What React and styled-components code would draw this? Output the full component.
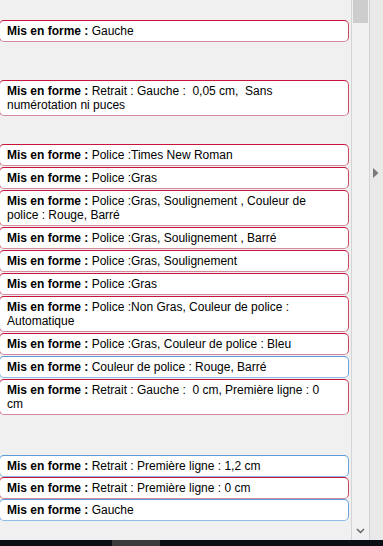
import React from 'react'
import styled, { createGlobalStyle } from 'styled-components'

const Global = createGlobalStyle`
  html, body {
    margin: 0;
    padding: 0;
    background: #f0f0f0;
    overflow: hidden;
  }
  body {
    font-family: "Liberation Sans", Arial, sans-serif;
  }
`

const Screen = styled.div`
  width: 383px;
  height: 546px;
  display: flex;
  flex-direction: column;
`

const Workspace = styled.div`
  flex: 1;
  display: flex;
  min-height: 0;
`

const Pane = styled.div`
  width: 351px;
  overflow: hidden;
`

const Group = styled.div`
  display: flex;
  flex-direction: column;
  gap: ${p => p.$gap}px;
  margin-top: ${p => p.$top}px;
`

const Bubble = styled.div`
  margin-left: -1px;
  width: 350px;
  box-sizing: border-box;
  background: #fff;
  border: 1px solid;
  border-color: ${p =>
    p.$blue ? '#5a9ad8 #6aa6dc #8dbbe6' : '#c8143c #c84a62 #d4889a'};
  border-radius: 5px;
  padding: 3px 12px 3px 7px;
  font-size: 12px;
  line-height: 14px;
  color: #000;
  white-space: pre-wrap;
`

const Label = styled.b`
  font-weight: bold;
`

const Scrollbar = styled.div`
  width: 17px;
  border-left: 1px solid #d4d4d4;
  background: #f0f0f0;
  display: flex;
  flex-direction: column;
  justify-content: space-between;
  align-items: center;
`

const Thumb = styled.div`
  width: 15px;
  height: 23px;
  background: #cdcdcd;
`

const DownArrow = styled.svg`
  margin-bottom: 6px;
`

const SidePanel = styled.div`
  flex: 1;
  border-left: 1px solid #d4d4d4;
  background: #e9e9e9;
  display: flex;
  align-items: flex-start;
  padding-top: 168px;
  padding-left: 3px;
`

const Taskbar = styled.div`
  height: 6px;
  background: #0b0f15;
  display: flex;
`

const TaskItem = styled.div`
  margin-left: 112px;
  width: 48px;
  background: #3a3a3a;
`

const groups = [
  { top: 20, gap: 1, items: [{ t: 'Gauche' }] },
  {
    top: 38,
    gap: 1,
    items: [{ t: 'Retrait : Gauche :  0,05 cm,  Sans numérotation ni puces' }],
  },
  {
    top: 28,
    gap: 1,
    items: [
      { t: 'Police :Times New Roman' },
      { t: 'Police :Gras' },
      { t: 'Police :Gras, Soulignement , Couleur de police : Rouge, Barré' },
      { t: 'Police :Gras, Soulignement , Barré' },
      { t: 'Police :Gras, Soulignement' },
      { t: 'Police :Gras' },
      { t: 'Police :Non Gras, Couleur de police : Automatique' },
      { t: 'Police :Gras, Couleur de police : Bleu' },
      { t: 'Couleur de police : Rouge, Barré', blue: true },
      { t: 'Retrait : Gauche :  0 cm, Première ligne : 0 cm' },
    ],
  },
  {
    top: 40,
    gap: 0,
    items: [
      { t: 'Retrait : Première ligne : 1,2 cm', blue: true },
      { t: 'Retrait : Première ligne : 0 cm' },
      { t: 'Gauche', blue: true },
    ],
  },
]

const App = () => (
  <Screen>
    <Global />
    <Workspace>
      <Pane>
        {groups.map((g, i) => (
          <Group key={i} $top={g.top} $gap={g.gap}>
            {g.items.map((it, j) => (
              <Bubble key={j} $blue={it.blue}>
                <Label>Mis en forme : </Label>
                {it.t}
              </Bubble>
            ))}
          </Group>
        ))}
      </Pane>
      <Scrollbar>
        <Thumb />
        <DownArrow width="9" height="6" viewBox="0 0 9 6">
          <path d="M1 1 L4.5 4.5 L8 1" fill="none" stroke="#606060" strokeWidth="1.4" />
        </DownArrow>
      </Scrollbar>
      <SidePanel>
        <svg width="6" height="10" viewBox="0 0 6 10">
          <path d="M0 0 L5.5 5 L0 10 Z" fill="#7a7a7a" />
        </svg>
      </SidePanel>
    </Workspace>
    <Taskbar>
      <TaskItem />
    </Taskbar>
  </Screen>
)

export default App
